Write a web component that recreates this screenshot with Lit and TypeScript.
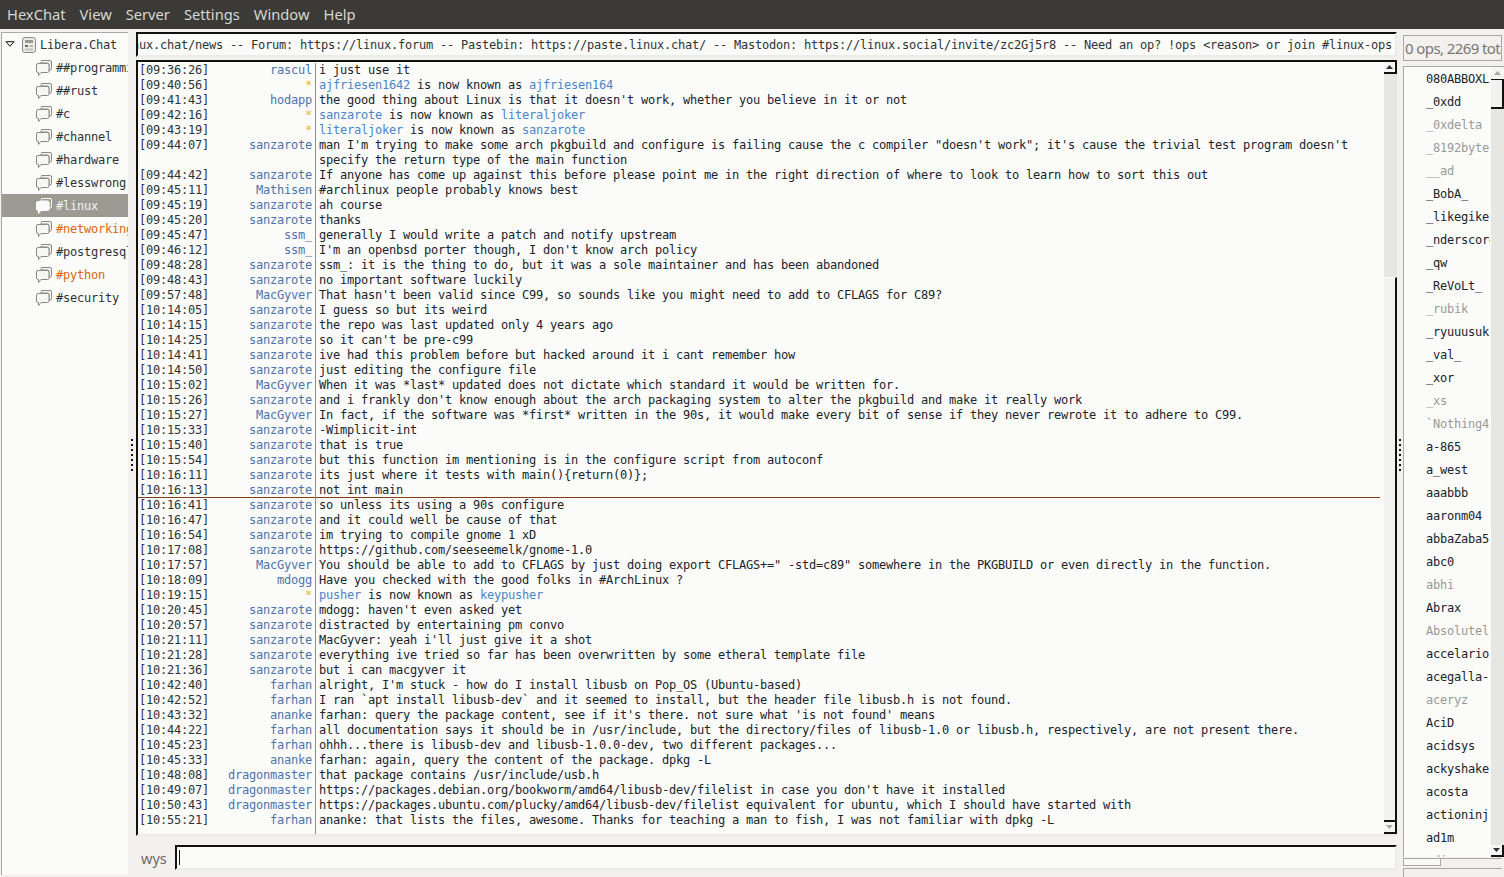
import { LitElement, html, css, svg } from "lit";
import { customElement } from "lit/decorators.js";

const channels: [string, string][] = [
  ["##programming", ""], ["##rust", ""], ["#c", ""], ["#channel", ""], ["#hardware", ""],
  ["#lesswrong", ""], ["#linux", "sel"], ["#networking", "hot"], ["#postgresql", ""],
  ["#python", "hot"], ["#security", ""],
];

const S = "sanzarote", M = "MacGyver";
const rows: any[] = [
  ["09:36:26", "rascul", "i just use it"],
  ["09:40:56", "*", html`<a>ajfriesen1642</a> is now known as <a>ajfriesen164</a>`],
  ["09:41:43", "hodapp", "the good thing about Linux is that it doesn't work, whether you believe in it or not"],
  ["09:42:16", "*", html`<a>sanzarote</a> is now known as <a>literaljoker</a>`],
  ["09:43:19", "*", html`<a>literaljoker</a> is now known as <a>sanzarote</a>`],
  ["09:44:07", S, `man I'm trying to make some arch pkgbuild and configure is failing cause the c compiler "doesn't work"; it's cause the trivial test program doesn't specify the return type of the main function`],
  ["09:44:42", S, "If anyone has come up against this before please point me in the right direction of where to look to learn how to sort this out"],
  ["09:45:11", "Mathisen", "#archlinux people probably knows best"],
  ["09:45:19", S, "ah course"],
  ["09:45:20", S, "thanks"],
  ["09:45:47", "ssm_", "generally I would write a patch and notify upstream"],
  ["09:46:12", "ssm_", "I'm an openbsd porter though, I don't know arch policy"],
  ["09:48:28", S, "ssm_: it is the thing to do, but it was a sole maintainer and has been abandoned"],
  ["09:48:43", S, "no important software luckily"],
  ["09:57:48", M, "That hasn't been valid since C99, so sounds like you might need to add to CFLAGS for C89?"],
  ["10:14:05", S, "I guess so but its weird"],
  ["10:14:15", S, "the repo was last updated only 4 years ago"],
  ["10:14:25", S, "so it can't be pre-c99"],
  ["10:14:41", S, "ive had this problem before but hacked around it i cant remember how"],
  ["10:14:50", S, "just editing the configure file"],
  ["10:15:02", M, "When it was *last* updated does not dictate which standard it would be written for."],
  ["10:15:26", S, "and i frankly don't know enough about the arch packaging system to alter the pkgbuild and make it really work"],
  ["10:15:27", M, "In fact, if the software was *first* written in the 90s, it would make every bit of sense if they never rewrote it to adhere to C99."],
  ["10:15:33", S, "-Wimplicit-int"],
  ["10:15:40", S, "that is true"],
  ["10:15:54", S, "but this function im mentioning is in the configure script from autoconf"],
  ["10:16:11", S, "its just where it tests with main(){return(0)};"],
  ["10:16:13", S, "not int main", "mark"],
  ["10:16:41", S, "so unless its using a 90s configure"],
  ["10:16:47", S, "and it could well be cause of that"],
  ["10:16:54", S, "im trying to compile gnome 1 xD"],
  ["10:17:08", S, "https://github.com/seeseemelk/gnome-1.0"],
  ["10:17:57", M, `You should be able to add to CFLAGS by just doing export CFLAGS+=" -std=c89" somewhere in the PKGBUILD or even directly in the function.`],
  ["10:18:09", "mdogg", "Have you checked with the good folks in #ArchLinux ?"],
  ["10:19:15", "*", html`<a>pusher</a> is now known as <a>keypusher</a>`],
  ["10:20:45", S, "mdogg: haven't even asked yet"],
  ["10:20:57", S, "distracted by entertaining pm convo"],
  ["10:21:11", S, "MacGyver: yeah i'll just give it a shot"],
  ["10:21:28", S, "everything ive tried so far has been overwritten by some etheral template file"],
  ["10:21:36", S, "but i can macgyver it"],
  ["10:42:40", "farhan", "alright, I'm stuck - how do I install libusb on Pop_OS (Ubuntu-based)"],
  ["10:42:52", "farhan", "I ran `apt install libusb-dev` and it seemed to install, but the header file libusb.h is not found."],
  ["10:43:32", "ananke", "farhan: query the package content, see if it's there. not sure what 'is not found' means"],
  ["10:44:22", "farhan", "all documentation says it should be in /usr/include, but the directory/files of libusb-1.0 or libusb.h, respectively, are not present there."],
  ["10:45:23", "farhan", "ohhh...there is libusb-dev and libusb-1.0.0-dev, two different packages..."],
  ["10:45:33", "ananke", "farhan: again, query the content of the package. dpkg -L"],
  ["10:48:08", "dragonmaster", "that package contains /usr/include/usb.h"],
  ["10:49:07", "dragonmaster", "https://packages.debian.org/bookworm/amd64/libusb-dev/filelist in case you don't have it installed"],
  ["10:50:43", "dragonmaster", "https://packages.ubuntu.com/plucky/amd64/libusb-dev/filelist equivalent for ubuntu, which I should have started with"],
  ["10:55:21", "farhan", "ananke: that lists the files, awesome. Thanks for teaching a man to fish, I was not familiar with dpkg -L"],
];

const users: [string, boolean][] = [
  ["080ABBOXL", false], ["_0xdd", false], ["_0xdelta", true], ["_8192byte", true], ["__ad", true],
  ["_BobA_", false], ["_likegiker", false], ["_nderscore", false], ["_qw", false], ["_ReVoLt_", false],
  ["_rubik", true], ["_ryuuusuk", false], ["_val_", false], ["_xor", false], ["_xs", true],
  ["`Nothing4", true], ["a-865", false], ["a_west", false], ["aaabbb", false], ["aaronm04", false],
  ["abbaZaba5", false], ["abc0", false], ["abhi", true], ["Abrax", false], ["Absolutel", true],
  ["accelario", false], ["acegalla-", false], ["aceryz", true], ["AciD", false], ["acidsys", false],
  ["ackyshake", false], ["acosta", false], ["actioninj", false], ["ad1m", false], ["adi", true],
];

const bubbles = svg`<path class="b2" d="M5.5 .5h8.5a1.5 1.5 0 0 1 1.5 1.5v6.5a1.5 1.5 0 0 1-1.5 1.5h-1v-5.5a1.5 1.5 0 0 0-1.5-1.5h-6.5v-1a1 1 0 0 1 .5-1z"/>
<path class="b1" d="M2 3.5h9.5a1.5 1.5 0 0 1 1.5 1.5v6a1.5 1.5 0 0 1-1.5 1.5h-6.5l-2.5 3v-3h-.5a1.5 1.5 0 0 1-1.5-1.5v-6a1.5 1.5 0 0 1 1.5-1.5z"/>`;

@customElement("app-root")
export class AppRoot extends LitElement {
  static styles = css`
    :host { display: flex; flex-direction: column; width: 1504px; height: 877px; overflow: hidden; background: #f2f1f0; font-family: "DejaVu Sans Mono", monospace; font-size: 12px; color: #2e3436; }
    .menu { height: 29px; flex: none; background: #3b3a36; color: #d8d7d3; display: flex; align-items: center; padding-left: 7px; gap: 14px; font: 14.7px/29px "Noto Sans", sans-serif; }
    .body { flex: 1; display: flex; min-height: 0; }
    .mono { letter-spacing: -0.224px; }
    .tree { width: 126px; margin: 3px 0 2px 1px; flex: none; background: #fbfbfa; border-left: 1px solid #aaa9a3; border-top: 1px solid #aaa9a3; overflow: hidden; }
    .node { height: 23px; display: flex; align-items: center; white-space: nowrap; overflow: hidden; padding-left: 34px; gap: 4px; color: #2e3436; }
    .node svg.bub { width: 16px; height: 16px; flex: none; }
    .b1, .b2 { fill: #f6f6f4; stroke: #8a8982; stroke-width: 1; }
    .node.srv { padding-left: 2px; gap: 0; }
    .arrow { flex: none; width: 10px; height: 6px; margin: -1px 7px 0 1px; }
    .srvicon { flex: none; width: 14px; height: 16px; margin-right: 4px; }
    .node.sel { background: #9c9b93; color: #f2f1f0; }
    .node.sel .b1 { fill: #fbfbfa; stroke: #fbfbfa; }
    .node.sel .b2 { fill: #9c9b93; stroke: #fbfbfa; }
    .node.hot { color: #d9680f; }
    .grip { width: 8px; flex: none; display: flex; align-items: center; justify-content: center; padding-top: 3px; box-sizing: border-box; }
    .grip.r { width: 6px; }
    .grip i { display: block; width: 2px; height: 32px; background: repeating-linear-gradient(#111 0 2px, transparent 2px 5px); }
    .main { width: 1261px; flex: none; display: flex; flex-direction: column; padding-top: 3px; }
    .topic { height: 25px; flex: none; box-sizing: border-box; background: #fbfbfa; border-top: 2px solid #111; border-left: 2px solid #111; border-right: 2px solid #ebebe8; border-bottom: 2px solid #ebebe8; overflow: hidden; display: flex; justify-content: flex-end; align-items: center; white-space: nowrap; padding-right: 3px; }
    .chatwrap { margin-top: 3px; height: 776px; flex: none; display: flex; box-sizing: border-box; background: #fbfbfa; border-top: 2px solid #111; border-left: 2px solid #111; border-bottom: 2px solid #ebebe8; }
    .log { flex: 1; min-width: 0; margin-right: 4px; display: flex; flex-direction: column; padding-top: 1px; overflow: hidden; }
    .row { display: flex; line-height: 15px; flex: none; }
    .row .t { width: 76px; padding-left: 1px; flex: none; box-sizing: border-box; }
    .row .n { width: 101px; text-align: right; padding-right: 3px; box-sizing: border-box; flex: none; white-space: nowrap; color: #4d74ad; }
    .row .n.star { color: #e0c040; }
    .row .m { flex: 1; min-width: 0; border-left: 1px solid #8f8e88; padding-left: 3px; white-space: pre-wrap; color: #20242a; }
    .row .m a { color: #4a86c9; }
    .row.mark { box-shadow: inset 0 -1px 0 #8a3d12; }
    .row.fill { flex: 1; }
    .sb { width: 13px; flex: none; box-sizing: border-box; background: #e6e6e3; display: flex; flex-direction: column; }
    .btn { height: 12px; width: 13px; flex: none; box-sizing: border-box; background: #f5f5f3; display: flex; align-items: center; justify-content: center; }
    .btn.k { border-right: 2px solid #111; border-bottom: 2px solid #111; }
    .btn svg { width: 7px; height: 4px; display: block; }
    .track { flex: none; }
    .thumb { flex: none; box-sizing: border-box; background: #f2f2f0; border-top: 1px solid #fff; border-right: 2px solid #111; border-bottom: 2px solid #111; }
    .thumb.k { border-top-color: #111; }
    .grow { flex: 1; }
    .entry { display: flex; align-items: flex-start; height: 36px; flex: none; box-sizing: border-box; padding: 9px 0 0 5px; }
    .nick { font: 14.5px/20px "Noto Sans", sans-serif; color: #6a6a6a; width: 34px; flex: none; margin-top: 3px; }
    .inp { flex: 1; height: 25px; box-sizing: border-box; background: #fbfbfa; border-top: 2px solid #111; border-left: 2px solid #111; border-right: 2px solid #ebebe8; border-bottom: 2px solid #ebebe8; padding: 3px 2px; }
    .inp i { display: block; width: 1px; height: 15px; background: #111; }
    .right { width: 101px; flex: none; display: flex; flex-direction: column; padding-top: 6px; }
    .count { height: 26px; flex: none; box-sizing: border-box; width: 99px; border: 1px solid #aaa9a3; font: 15px/25px "Noto Sans", sans-serif; letter-spacing: -0.6px; color: #77776f; overflow: hidden; white-space: nowrap; padding-left: 1px; }
    .ulist { margin-top: 5px; height: 791px; flex: none; display: flex; box-sizing: border-box; background: #fbfbfa; border-top: 1px solid #aaa9a3; border-left: 1px solid #aaa9a3; overflow: hidden; }
    .names { flex: 1; min-width: 0; overflow: hidden; padding-top: 1px; margin-right: 1px; }
    .u { height: 23px; line-height: 23px; padding-left: 22px; white-space: nowrap; color: #20242a; overflow: hidden; }
    .u.away { color: #9a9a96; }
    .hs { margin-top: 1px; width: 99px; height: 8px; flex: none; box-sizing: border-box; border-top: 1px solid #aaa9a3; border-left: 1px solid #aaa9a3; background: #f2f1f0; }
    .hs i { display: block; width: 37px; height: 100%; background: #f9f9f7; box-sizing: border-box; border-right: 1px solid #aaa9a3; border-bottom: 1px solid #aaa9a3; }
    .stat { margin-top: 2px; width: 99px; height: 9px; flex: none; border-top: 1px solid #aaa9a3; border-left: 1px solid #aaa9a3; box-sizing: border-box; }
  `;

  private btn(dir: "up" | "down", black: boolean, dim: boolean) {
    const d = dir === "up" ? "M3.5 0L7 4H0z" : "M0 0h7L3.5 4z";
    return html`<div class="btn ${black ? "k" : ""}"><svg viewBox="0 0 7 4"><path d="${d}" fill="${dim ? "#a8a8a4" : "#2e3436"}"/></svg></div>`;
  }

  render() {
    return html`
      <div class="menu">${["HexChat", "View", "Server", "Settings", "Window", "Help"].map((m) => html`<span>${m}</span>`)}</div>
      <div class="body">
        <div class="tree">
          <div class="node srv">
            <svg class="arrow" viewBox="0 0 10 6"><path d="M1 .7h8l-4 4.6z" fill="#fbfbfa" stroke="#111"/></svg>
            <svg class="srvicon" viewBox="0 0 14 16"><rect x=".5" y=".5" width="13" height="15" rx="2.5" fill="#ecece9" stroke="#8a8982"/><rect x="3" y="3" width="8" height="3" fill="#9a9a94"/><rect x="3" y="8" width="3" height="2" fill="#6f6e68"/><rect x="7.5" y="8" width="3.5" height="2" fill="#b8b8b2"/><rect x="3" y="11.5" width="8" height="2" fill="#c4c4be"/></svg>
            <span class="mono">Libera.Chat</span>
          </div>
          ${channels.map(([c, k]) => html`<div class="node ${k}"><svg class="bub" viewBox="0 0 16 16">${bubbles}</svg><span class="mono">${c}</span></div>`)}
        </div>
        <div class="grip"><i></i></div>
        <div class="main">
          <div class="topic"><span class="mono">https://linux.chat/news -- Forum: https://linux.forum -- Pastebin: https://paste.linux.chat/ -- Mastodon: https://linux.social/invite/zc2Gj5r8 -- Need an op? !ops &lt;reason&gt; or join #linux-ops</span></div>
          <div class="chatwrap">
            <div class="log mono">
              ${rows.map((r) => html`<div class="row ${r[3] || ""}"><div class="t">[${r[0]}]</div><div class="n ${r[1] === "*" ? "star" : ""}">${r[1]}</div><div class="m">${r[2]}</div></div>`)}
              <div class="row fill"><div class="t"></div><div class="n"></div><div class="m"></div></div>
            </div>
            <div class="sb">
              ${this.btn("up", true, false)}
              <div class="track" style="height:203px"></div>
              <div class="thumb grow"></div>
              ${this.btn("down", true, true)}
            </div>
          </div>
          <div class="entry"><span class="nick">wys</span><div class="inp"><i></i></div></div>
        </div>
        <div class="grip r"><i></i></div>
        <div class="right">
          <div class="count">0 ops, 2269 total</div>
          <div class="ulist">
            <div class="names mono">${users.map(([u, a]) => html`<div class="u ${a ? "away" : ""}">${u}</div>`)}</div>
            <div class="sb">
              ${this.btn("up", false, true)}
              <div class="thumb k" style="height:30px"></div>
              <div class="grow"></div>
              ${this.btn("down", true, false)}
            </div>
          </div>
          <div class="hs"><i></i></div>
          <div class="stat"></div>
        </div>
      </div>`;
  }
}
